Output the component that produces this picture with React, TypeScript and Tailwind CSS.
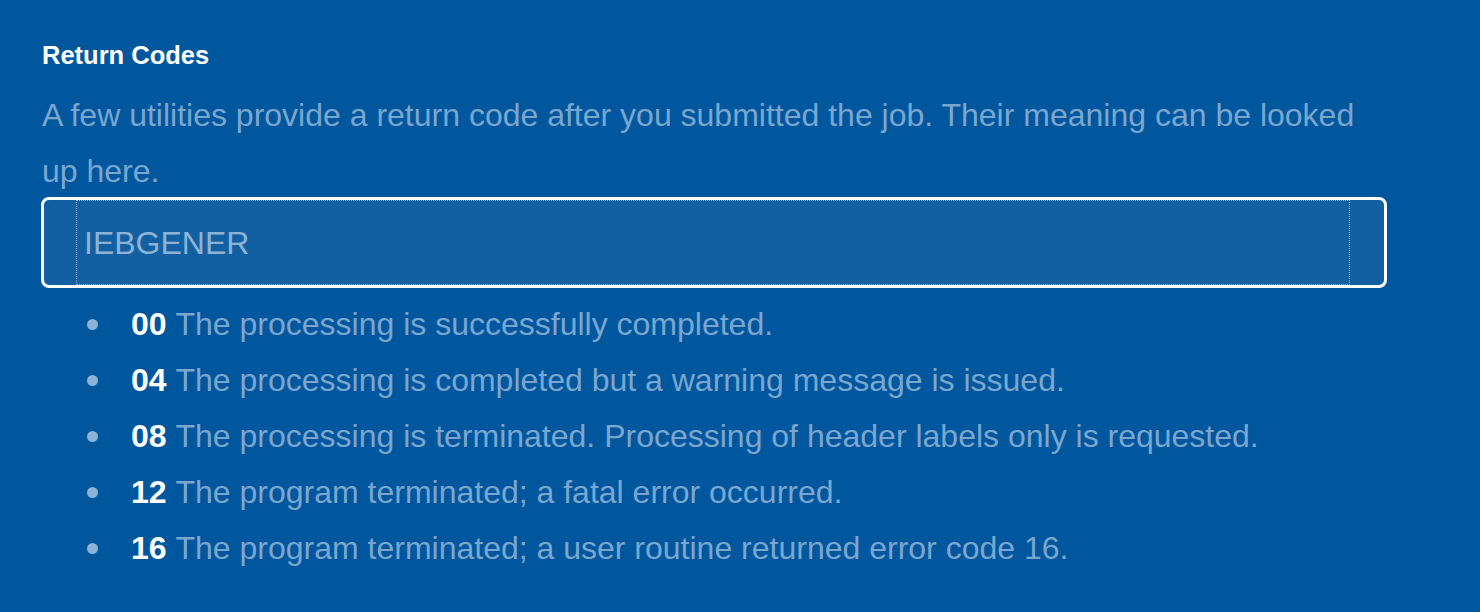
import React from "react";

const items = [
  ["00", "The processing is successfully completed."],
  ["04", "The processing is completed but a warning message is issued."],
  ["08", "The processing is terminated. Processing of header labels only is requested."],
  ["12", "The program terminated; a fatal error occurred."],
  ["16", "The program terminated; a user routine returned error code 16."],
];

export default function App() {
  return (
    <div
      className="w-[1480px] h-[612px] bg-[#01579e] pt-[40px] pl-[42px] overflow-hidden"
      style={{ fontFamily: '"Liberation Sans", Arial, sans-serif' }}
    >
      <h2 className="text-[25.5px] leading-[30px] font-bold text-white mb-[17px]">Return Codes</h2>
      <p className="text-[32px] leading-[56px] text-[#7ba6cf] w-[1330px]">
        A few utilities provide a return code after you submitted the job. Their meaning can be looked up here.
      </p>
      <div className="-mt-[2px] -ml-[1px] w-[1346px] h-[91px] border-[3px] border-white rounded-[8px] bg-[#1260a2] flex">
        <div className="ml-[32px] mr-[34px] flex-1 border border-dotted border-[#8cb3d6] flex items-center pl-[7px]">
          <span className="text-[32px] text-[#8cb3d6] leading-none">IEBGENER</span>
        </div>
      </div>
      <ul className="mt-[8px]">
        {items.map(([code, text]) => (
          <li key={code} className="flex items-center h-[56px] text-[32px]">
            <span className="ml-[45px] w-[11px] h-[11px] shrink-0 rounded-full bg-[#8cb3d6]" />
            <span className="ml-[33px] font-bold text-white">{code}</span>
            <span className="text-[#7ba6cf]">&nbsp;{text}</span>
          </li>
        ))}
      </ul>
    </div>
  );
}
